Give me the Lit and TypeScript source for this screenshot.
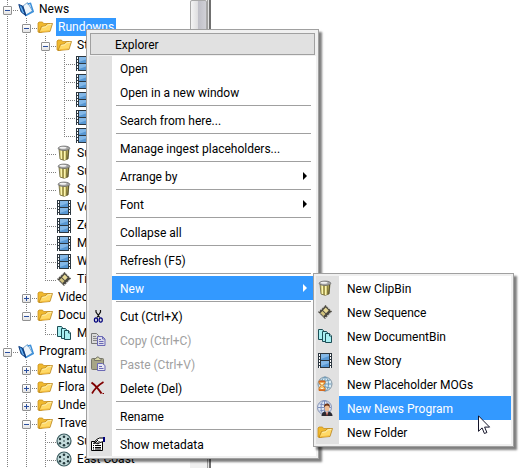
import { LitElement, html, css, svg, nothing } from "lit";
import { customElement, property } from "lit/decorators.js";
import { classMap } from "lit/directives/class-map.js";

const ICONS: Record<string, unknown> = {
  book: svg`
    <path d="M5 5l4.500-3.500 5 8.500-6.500 4z" fill="#eef5fb" stroke="#7ea9cf" stroke-width="1"/>
    <path d="M9.500 3l3-.700 2.700 8.200-8 4.300" fill="none" stroke="#3b8fd9" stroke-width="1.500"/>
    <path d="M.800 3.500L4.500 5l3.200 9.500L3.200 11z" fill="#2a7fd0" stroke="#123f80" stroke-width="1"/>
    <path d="M2.500 5.500l3 6.500" stroke="#7cbcf2" stroke-width="1"/>
    <path d="M4.500 5l3.200 9.500" stroke="#123f80" stroke-width="1.200"/>`,
  folder: svg`
    <path d="M1 13V4l1-1h3.500l1 1.500h6.500V8l-9 5.500z" fill="#f0b92e" stroke="#c99020" stroke-width=".800"/>
    <path d="M2 13.500L4.500 7.500l4-.500 1.500-2 5.500-.500-2.500 8z" fill="#ffd966" stroke="#b9831a" stroke-width=".800"/>
    <path d="M5.200 8.300l3.700-.500 1.500-2 4-.300" fill="none" stroke="#fff3b8"/>
    <path d="M3.500 12.800l9-1" stroke="#f2ba3a"/>`,
  film: svg`
    <rect x="1" y="1" width="14" height="15" fill="#2c3740"/>
    <rect x="4" y="2" width="8" height="6" fill="#5797d3"/>
    <rect x="4" y="9" width="8" height="6" fill="#5797d3"/>
    <path d="M4 2h8v2l-8 3zM4 9h8v2l-8 3z" fill="#83b8e8"/>
    <path d="M2.500 2v14M13.500 2v14" stroke="#fff" stroke-width="1" stroke-dasharray="2 1"/>`,
  bin: svg`
    <path d="M3 4l1 10q4 2.500 8 0l1-10z" fill="#c3b65c" stroke="#6b6640" stroke-width=".800"/>
    <path d="M5.200 5l.300 9M8.700 6v9" stroke="#fbf5b0" stroke-width="1.500"/>
    <path d="M7 6v9M10.700 5.500l-.300 9" stroke="#857c3e"/>
    <path d="M12.500 5l-.800 9" stroke="#55502c"/>
    <ellipse cx="8" cy="3.300" rx="5.800" ry="2.200" fill="#a2a2a2" stroke="#6a6a6a" stroke-width=".800"/>
    <ellipse cx="7" cy="2.800" rx="3.500" ry="1" fill="#f2f2f2"/>`,
  sequence: svg`
    <path d="M8.500 1L15 7.500 8 15 1 8z" fill="#4a4840"/>
    <path d="M8.700 3.500l3 3-2.700 2.700-3-3z" fill="#e6d896"/>
    <path d="M5.500 7l3 3-2 2-3-3z" fill="#d3c47e"/>
    <path d="M2 7.500L8 1.700M8.300 14l6-6" stroke="#fff" stroke-dasharray="1.400 1.200"/>
    <path d="M9.500 2.500l4.500 4.500M2.500 9l5 5" stroke="#c9c6b8" stroke-dasharray="1.200 1.200"/>`,
  docs: svg`
    <g fill="#a9f0f2" stroke="#1d4f57">
      <path d="M1.500 1.500h4l1.500 2v8H1.500z"/>
      <path d="M5.500 3.500h4l1.500 2v8H5.500z"/>
      <path d="M8.500 5.500h4l2 2.500v6.500h-6z"/>
      <path d="M12.500 5.500V8h2" fill="#fff"/>
    </g>`,
  reel: svg`
    <circle cx="8" cy="8" r="7" fill="#c4dcdc" stroke="#3c5c60" stroke-width="1.200"/>
    <g fill="#23383c"><circle cx="8" cy="8" r=".800"/><circle cx="8" cy="3.700" r="1.300"/><circle cx="8" cy="12.300" r="1.300"/>
    <circle cx="4" cy="6" r="1.200"/><circle cx="12" cy="6" r="1.200"/><circle cx="4" cy="10.200" r="1.200"/><circle cx="12" cy="10.200" r="1.200"/></g>`,
  cut: svg`
    <path d="M6 2v2l3.700 5.500M10.500 2v2L7 9.500" fill="none" stroke="#111" stroke-width="1.200"/>
    <ellipse cx="6" cy="12" rx="1.600" ry="2.200" fill="none" stroke="#00007c" stroke-width="1.200"/>
    <ellipse cx="10.700" cy="12" rx="1.600" ry="2.200" fill="none" stroke="#00007c" stroke-width="1.200"/>`,
  copy: svg`
    <path d="M1.500 1.500h5l2 2v8h-7z" fill="#dadada" stroke="#777"/>
    <path d="M3 4.500h3M3 6.500h4M3 8.500h4" stroke="#888"/>
    <path d="M7.500 4.500h5l2.500 2.500v6.500H7.500z" fill="#dedeea" stroke="#6b69b5"/>
    <path d="M12.500 4.500V7H15M9 7.500h2M9 9.500h4.500M9 11.500h4.500" fill="none" stroke="#6b69b5"/>`,
  paste: svg`
    <rect x="1.500" y="2.500" width="12" height="11" rx="1" fill="#a6a586" stroke="#77766a"/>
    <path d="M4.500 4.500v-2h1.500l1-1.500h1.500l1 1.500h1.500v2z" fill="#d8d7a8" stroke="#77766a"/>
    <path d="M7.500 7.500h5l2.500 2v5H7.500z" fill="#e8e8f2" stroke="#6b69b5"/>
    <path d="M9 10.500h3M9 12.500h4.500" stroke="#6b69b5"/>`,
  delete: svg`
    <path d="M1.500 2.500q5 3.500 10 11" fill="none" stroke="#800000" stroke-width="2"/>
    <path d="M13.500 2Q6 6.500 2 13.500" fill="none" stroke="#800000" stroke-width="1.600"/>
    <path d="M12.500 13.500h1.500" stroke="#800000"/>`,
  props: svg`
    <path d="M1.500 5.500h11v9h-11z" fill="#fff" stroke="#000"/>
    <path d="M3 9.500h1M5 9.500h6M3 11.500h1M5 11.500h6M3 13h1M5 13h6" stroke="#000"/>
    <path d="M3.500 7.500l3-4 3-1.500h4v3.500L10 6.500 8 8 6 7z" fill="#fff" stroke="#000"/>
    <path d="M5 7l3-3M7 7.500l2.500-2.500" stroke="#000"/>
    <rect x="13" y="1" width="2" height="5" fill="#00007c"/>`,
  placeholder: svg`
    <circle cx="8" cy="8" r="7" fill="#dcebf2" stroke="#8296a5"/>
    <path d="M8 1v14M1.500 8h13M3 4q5 2.500 10 0M3 12q5-2.500 10 0" fill="none" stroke="#6d9ab8"/>
    <ellipse cx="8" cy="8" rx="3.500" ry="7" fill="none" stroke="#6d9ab8"/>
    <path d="M2 5h6v2L6 9.500 8 12v2.500H2V12l2-2.500L2 7z" fill="#f6c46f" stroke="#c97a2a"/>
    <path d="M2 5.500h6M2 14h6" stroke="#d9661c" stroke-width="1.300"/>
    <path d="M4 7.500h2M4 12.500h2" stroke="#fff6d6"/>`,
  program: svg`
    <circle cx="7.500" cy="7.500" r="7" fill="#e4ebf7" stroke="#8492b4"/>
    <path d="M7.500 1v13M1 7.500h13M2.500 4q5 2 10 0M2.500 11q5-2 10 0" fill="none" stroke="#7b8fbe"/>
    <ellipse cx="7.500" cy="7.500" rx="3.500" ry="7" fill="none" stroke="#7b8fbe"/>
    <path d="M4.500 16q0-4 3.500-4.500h4q3.500 1 3.500 4.500z" fill="#2b2b33"/>
    <path d="M8.500 11.500h3L10 15z" fill="#fff"/><path d="M10 12v3.500" stroke="#c23b22"/>
    <ellipse cx="10" cy="8" rx="2.400" ry="3.300" fill="#f0bd92"/>
    <path d="M7.200 7.500q-.500-4 2.800-4t2.800 4q-1-2-2.800-2t-2.800 2z" fill="#6d3417"/>`,
};

const icon = (name: string) =>
  svg`<svg class="icon" width="16" height="16" viewBox="0 0 16 16" aria-hidden="true">${ICONS[name]}</svg>`;

type Row = {
  // One mark per indent level: "|" passing line, "." blank, "T" branch, "L" last branch.
  guides: string;
  icon: string;
  label?: string;
  open?: boolean;
  selected?: boolean;
};

const ROWS: Row[] = [
  { guides: "T", icon: "book", label: "News", open: true },
  { guides: "|T", icon: "folder", label: "Rundowns", open: true, selected: true },
  { guides: "||T", icon: "folder", label: "St", open: true },
  { guides: "|||T", icon: "film" },
  { guides: "|||T", icon: "film" },
  { guides: "|||T", icon: "film" },
  { guides: "|||T", icon: "film" },
  { guides: "|||L", icon: "film" },
  { guides: "||T", icon: "bin", label: "Su" },
  { guides: "||T", icon: "bin", label: "Su" },
  { guides: "||T", icon: "bin", label: "Su" },
  { guides: "||T", icon: "film", label: "Vo" },
  { guides: "||T", icon: "film", label: "Ze" },
  { guides: "||T", icon: "film", label: "M" },
  { guides: "||T", icon: "film", label: "W" },
  { guides: "||L", icon: "sequence", label: "Ti" },
  { guides: "|T", icon: "folder", label: "Video", open: false },
  { guides: "|L", icon: "folder", label: "Docu", open: true },
  { guides: "|.L", icon: "docs", label: "M" },
  { guides: "T", icon: "book", label: "Programs", open: true },
  { guides: "|T", icon: "folder", label: "Natur", open: false },
  { guides: "|T", icon: "folder", label: "Flora", open: false },
  { guides: "|T", icon: "folder", label: "Under", open: false },
  { guides: "|T", icon: "folder", label: "Trave", open: true },
  { guides: "||T", icon: "reel", label: "Su" },
  { guides: "||T", icon: "reel", label: "East Coast" },
];

type Item = { label: string; icon?: string; sub?: boolean; off?: boolean; active?: boolean };
type Entry = Item | "-";

const CONTEXT: Entry[] = [
  { label: "Open" },
  { label: "Open in a new window" },
  "-",
  { label: "Search from here..." },
  "-",
  { label: "Manage ingest placeholders..." },
  "-",
  { label: "Arrange by", sub: true },
  "-",
  { label: "Font", sub: true },
  "-",
  { label: "Collapse all" },
  "-",
  { label: "Refresh (F5)" },
  "-",
  { label: "New", sub: true, active: true },
  "-",
  { label: "Cut (Ctrl+X)", icon: "cut" },
  { label: "Copy (Ctrl+C)", icon: "copy", off: true },
  { label: "Paste (Ctrl+V)", icon: "paste", off: true },
  { label: "Delete (Del)", icon: "delete" },
  "-",
  { label: "Rename" },
  "-",
  { label: "Show metadata", icon: "props" },
];

const NEW_ITEMS: Entry[] = [
  { label: "New ClipBin", icon: "bin" },
  { label: "New Sequence", icon: "sequence" },
  { label: "New DocumentBin", icon: "docs" },
  { label: "New Story", icon: "film" },
  { label: "New Placeholder MOGs", icon: "placeholder" },
  { label: "New News Program", icon: "program", active: true },
  { label: "New Folder", icon: "folder" },
];

@customElement("explorer-tree")
export class ExplorerTree extends LitElement {
  static styles = css`
    :host { display: block; overflow: hidden; }
    .row { display: flex; align-items: center; height: 18px; padding-left: 3px; white-space: nowrap; }
    .guide {
      --dots: repeating-linear-gradient(to bottom, #808080 0 1px, transparent 1px 2px);
      --dash: repeating-linear-gradient(to right, #808080 0 1px, transparent 1px 2px);
      flex: none;
      display: flex;
      align-items: center;
      width: 19px;
      height: 18px;
      background-repeat: no-repeat;
    }
    .pass { background-image: var(--dots); background-size: 1px 18px; background-position: 4px 0; }
    .branch, .last {
      width: 15px;
      background-image: var(--dots), var(--dash);
      background-position: 4px 0, 4px 10px;
      background-size: 1px 18px, 11px 1px;
    }
    .last { background-size: 1px 10px, 11px 1px; }
    .toggle {
      box-sizing: border-box;
      width: 9px;
      height: 9px;
      margin: 2px 0 0;
      padding: 0;
      border: 1px solid #919191;
      border-radius: 1px;
      background:
        linear-gradient(#2b4f9e, #2b4f9e) center / 5px 1px no-repeat,
        linear-gradient(#fff, #e4e4e4);
    }
    .closed {
      background:
        linear-gradient(#2b4f9e, #2b4f9e) center / 5px 1px no-repeat,
        linear-gradient(#2b4f9e, #2b4f9e) center / 1px 5px no-repeat,
        linear-gradient(#fff, #e4e4e4);
    }
    .icon { flex: none; }
    .label { margin-left: 3px; padding: 0 2px; line-height: 18px; }
    .selected { background: #3399ff; color: #fff; }
  `;

  guide(mark: string, row: Row) {
    const end = mark === "T" || mark === "L";
    return html`<span class=${classMap({ guide: true, pass: mark === "|", branch: mark === "T", last: mark === "L" })}
      >${end && row.open !== undefined
        ? html`<button class=${classMap({ toggle: true, closed: !row.open })} aria-label=${`Toggle ${row.label}`}></button>`
        : nothing}</span>`;
  }

  render() {
    return html`<div role="tree">
      ${ROWS.map((row) => html`
        <div class="row" role="treeitem">
          ${[...row.guides].map((mark) => this.guide(mark, row))}${icon(row.icon)}
          ${row.label ? html`<span class=${classMap({ label: true, selected: !!row.selected })}>${row.label}</span>` : nothing}
        </div>`)}
    </div>`;
  }
}

@customElement("popup-menu")
export class PopupMenu extends LitElement {
  @property() heading = "";
  @property({ attribute: false }) entries: Entry[] = [];

  static styles = css`
    :host {
      display: block;
      box-sizing: border-box;
      padding: 2px;
      border: 1px solid #a0a0a0;
      background: #f0f0f0;
      box-shadow: 3px 3px 2px rgba(0, 0, 0, 0.5);
    }
    .heading {
      margin: 1px;
      padding: 2px 0 0 24px;
      border: 1px solid #a0a0a0;
      background: #e1e1e1;
      font-size: inherit;
      font-weight: normal;
      line-height: 18px;
    }
    .list { background: linear-gradient(to right, #e1e1e1 23px, #fff 23px); }
    .item {
      display: flex;
      align-items: center;
      width: 100%;
      height: 24px;
      margin: 0;
      padding: 0;
      border: 0;
      background: none;
      color: #000;
      font: inherit;
      text-align: left;
      white-space: nowrap;
    }
    .gutter { flex: none; display: flex; width: 22px; padding-left: 1px; }
    .text { flex: 1; display: flex; align-items: center; justify-content: space-between; padding: 2px 9px 0 8px; line-height: 22px; }
    .arrow { margin-bottom: 2px; }
    .active .text { background: #3399ff; color: #fff; }
    .item:disabled { color: #a0a0a0; }
    .line { height: 1px; margin: 0 5px 0 27px; padding: 0; border: 0; background: #a0a0a0; }
    .divider { padding: 1px 0 2px; }
  `;

  render() {
    return html`
      ${this.heading ? html`<h2 class="heading">${this.heading}</h2>` : nothing}
      <div class="list" role="menu">
        ${this.entries.map((e) => e === "-"
          ? html`<div class="divider"><hr class="line" /></div>`
          : html`<button class=${classMap({ item: true, active: !!e.active })} role="menuitem" ?disabled=${!!e.off}>
              <span class="gutter">${e.icon ? icon(e.icon) : nothing}</span>
              <span class="text">${e.label}${e.sub
                ? html`<svg class="arrow" width="4" height="8" viewBox="0 0 4 8" aria-hidden="true"><path d="M0 0l4 4-4 4z" fill="currentColor" /></svg>`
                : nothing}</span>
            </button>`)}
      </div>`;
  }
}

@customElement("app-root")
export class AppRoot extends LitElement {
  static styles = css`
    :host {
      display: block;
      position: relative;
      min-height: 100vh;
      overflow: hidden;
      background: #fff;
      color: #000;
      font: 12px Roboto, "Open Sans", sans-serif;
    }
    .panel { display: flex; width: 40%; min-width: 211px; min-height: 100vh; }
    .tree { flex: 1; min-width: 0; }
    .scroll { display: flex; flex-direction: column; width: 17px; background: #f0f0f0; }
    .thumb {
      flex: 0 0 60%;
      box-sizing: border-box;
      border: 1px solid #a8a8a8;
      border-radius: 2px;
      background: linear-gradient(to right, #f4f4f4, #dcdcde 50%, #c0c0c8 50%, #d0d0d6);
    }
    .edge { width: 1px; border: solid; border-width: 0 2px 0 1px; border-color: #707070 #707070 #707070 #a0a0a0; background: #e3e3e3; }
    .context { position: absolute; left: 86px; top: 29px; width: 233px; }
    .submenu { position: absolute; left: 313px; top: 273px; width: 201px; }
    .cursor { position: absolute; left: 478px; top: 415px; }
  `;

  render() {
    return html`
      <div class="panel">
        <explorer-tree class="tree"></explorer-tree>
        <div class="scroll"><div class="thumb"></div></div>
        <div class="edge"></div>
      </div>
      <popup-menu class="context" heading="Explorer" .entries=${CONTEXT}></popup-menu>
      <popup-menu class="submenu" .entries=${NEW_ITEMS}></popup-menu>
      <svg class="cursor" width="13" height="20" viewBox="0 0 13 20" aria-hidden="true">
        <path d="M.5.800v15.500l3.600-3.400 2.300 5.600 2.500-1-2.300-5.400h5z" fill="#fff" stroke="#15152a" />
      </svg>`;
  }
}
